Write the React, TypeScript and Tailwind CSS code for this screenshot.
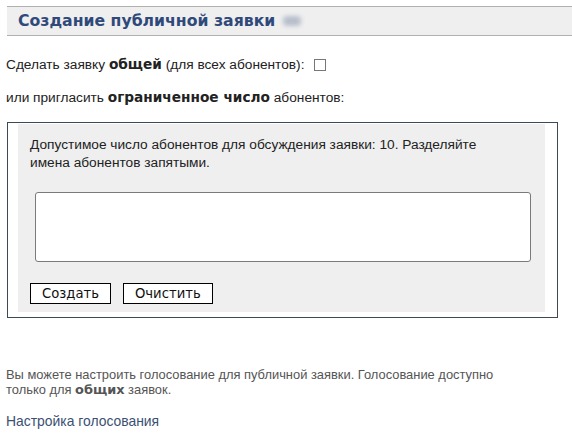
export default function App() {
  return (
    <div className="w-[572px] h-[437px] bg-white text-[13.7px] text-[#222] font-['Liberation_Sans',Arial,sans-serif] overflow-hidden">
      <div className="pt-[6px] pl-[7px]">
        <div className="h-[30px] bg-[#efefef] border-y border-[#b0b0b0] flex items-center pl-[11px]">
          <h1 className="text-[15.7px] font-bold text-[#2f4a7a] font-['DejaVu_Sans',sans-serif] leading-none">
            Создание публичной заявки
          </h1>
          <span className="ml-[8px] w-[18px] h-[10px] rounded-sm bg-[#b8bfcc] blur-[2px]" />
        </div>
      </div>

      <div className="pl-[6px] mt-[21px] flex items-center h-[16px]">
        <span>
          Сделать заявку <b className="font-['DejaVu_Sans',sans-serif]">общей</b> (для всех абонентов):
        </span>
        <input type="checkbox" className="ml-[10px] w-[12px] h-[12px] appearance-none border border-[#777] bg-white" />
      </div>

      <div className="pl-[6px] mt-[17px] h-[16px] flex items-center">
        <span>
          или пригласить <b className="font-['DejaVu_Sans',sans-serif]">ограниченное число</b> абонентов:
        </span>
      </div>

      <div className="ml-[7px] mt-[16px] w-[551px] h-[196px] border border-[#3c4a58] pt-[1px] pl-[10px]">
        <div className="w-[527px] h-[188px] bg-[#efefef] pt-[12px] pl-[12px]">
          <p className="leading-[18px] w-[475px]">
            Допустимое число абонентов для обсуждения заявки: 10. Разделяйте имена абонентов запятыми.
          </p>
          <textarea className="block ml-[5px] mt-[20px] w-[496px] h-[70px] border border-[#7a7a7a] rounded-[3px] bg-white resize-none" />
          <div className="flex gap-[12px] mt-[21px]">
            <button className="h-[21px] px-[11px] border border-black bg-white text-[13.2px] text-[#111] font-['DejaVu_Sans',sans-serif] leading-none">
              Создать
            </button>
            <button className="h-[21px] px-[11px] border border-black bg-white text-[13.2px] text-[#111] font-['DejaVu_Sans',sans-serif] leading-none">
              Очистить
            </button>
          </div>
        </div>
      </div>

      <div className="pl-[6px] mt-[49px] text-[12.9px] text-[#555] leading-[15px]">
        <p>
          Вы можете настроить голосование для публичной заявки. Голосование доступно
          <br />
          только для <b className="font-['DejaVu_Sans',sans-serif]">общих</b> заявок.
        </p>
        <a href="#" className="block mt-[17px] text-[13.9px] text-[#3b5072]">
          Настройка голосования
        </a>
      </div>
    </div>
  )
}
